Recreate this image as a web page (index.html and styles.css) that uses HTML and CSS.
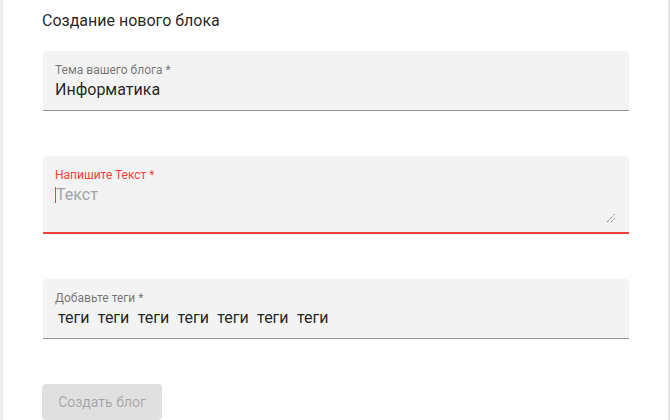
FILE: index.html
```html
<!DOCTYPE html>
<html lang="ru">
<head>
<meta charset="utf-8">
<title>Создание нового блока</title>
<link rel="stylesheet" href="styles.css">
</head>
<body>
<div class="page">
  <form class="card">
    <h2 class="title">Создание нового блока</h2>

    <div class="field">
      <div class="label">Тема вашего блога *</div>
      <div class="value">Информатика</div>
    </div>

    <div class="field field-multi field-error">
      <div class="label">Напишите Текст *</div>
      <div class="value placeholder"><span class="caret"></span>Текст</div>
      <svg class="resize" width="10" height="10" viewBox="0 0 10 10">
        <path d="M1 9 L9 1 M5 9 L9 5" stroke="#555" stroke-width="1" stroke-dasharray="1 1" fill="none"/>
      </svg>
    </div>

    <div class="field">
      <div class="label">Добавьте теги *</div>
      <div class="value tags">
        <span class="tag">теги</span><span class="tag">теги</span><span class="tag">теги</span><span class="tag">теги</span><span class="tag">теги</span><span class="tag">теги</span><span class="tag">теги</span>
      </div>
    </div>

    <button class="btn" type="button" disabled>Создать блог</button>
  </form>
</div>
</body>
</html>
```

FILE: styles.css
```css
html, body {
  margin: 0;
  padding: 0;
}
body {
  background: #eeeeee;
  font-family: Roboto, "Liberation Sans", Arial, sans-serif;
  height: 420px;
  overflow: hidden;
}
.page {
  margin-left: 3px;
  width: 667px;
  height: 420px;
  background: #ffffff;
  border-right: 2px solid #e6e6e6;
  box-sizing: border-box;
}
.card {
  padding: 11px 39px 0 40px;
  display: flex;
  flex-direction: column;
  gap: 45px;
}
.title {
  margin: 0 0 -24px -1px;
  font-size: 16px;
  font-weight: 400;
  line-height: 19px;
  color: rgba(0, 0, 0, 0.87);
}
.field {
  position: relative;
  background: #f3f3f3;
  border-radius: 4px 4px 0 0;
  border-bottom: 1px solid #949494;
  height: 47px;
  padding: 12px 12px 0;
  box-sizing: content-box;
}
.label {
  margin: 0;
  font-size: 12px;
  line-height: 14px;
  color: rgba(0, 0, 0, 0.54);
}
.value {
  margin: 3px 0 0;
  font-size: 16px;
  line-height: 19px;
  color: rgba(0, 0, 0, 0.87);
  white-space: nowrap;
}
.field-multi {
  height: 64px;
}
.field-error {
  border-bottom: 2px solid #f44336;
}
.field-error .label {
  color: #f44336;
}
.placeholder {
  color: #a0a4a8;
  display: flex;
  align-items: center;
}
.caret {
  display: inline-block;
  width: 1px;
  height: 16px;
  background: #f44336;
}
.resize {
  position: absolute;
  right: 13px;
  bottom: 9px;
}
.tags {
  padding-left: 3px;
}
.tag {
  margin-right: 8.3px;
}
.btn {
  align-self: flex-start;
  width: 120px;
  height: 36px;
  border: 0;
  border-radius: 4px;
  background: #e0e0e0;
  color: rgba(0, 0, 0, 0.28);
  font-family: Roboto, "Liberation Sans", Arial, sans-serif;
  font-size: 14px;
  font-weight: 400;
  padding: 0 16px;
  margin-left: -1px;
}
```
